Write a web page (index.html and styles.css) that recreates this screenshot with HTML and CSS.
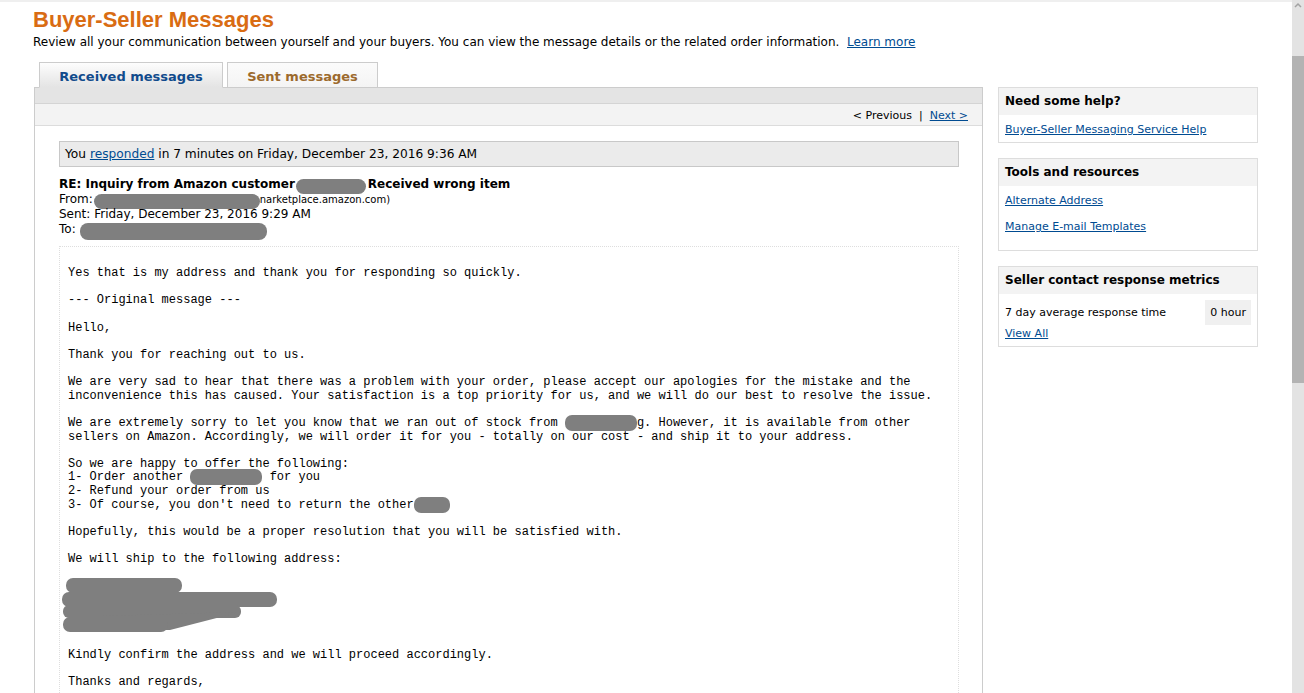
FILE: index.html
```html
<!DOCTYPE html>
<html lang="en">
<head>
  <meta charset="UTF-8">
  <title>Buyer-Seller Messages</title>
  <link rel="stylesheet" href="styles.css">
</head>
<body>
  <div class="window">
    <div class="page">
      <h1 class="title">Buyer-Seller Messages</h1>
      <p class="intro">Review all your communication between yourself and your buyers. You can view the message details or the related order information. &nbsp;<a href="#">Learn more</a></p>

      <div class="layout">
        <div class="main">
          <div class="tabs">
            <a class="tab active" href="#">Received messages</a>
            <a class="tab" href="#">Sent messages</a>
          </div>
          <div class="panel">
            <div class="panel-bar"></div>
            <div class="pager">&lt; Previous &nbsp;|&nbsp; <a href="#">Next &gt;</a></div>
            <div class="panel-body">
              <div class="responded">You <a href="#">responded</a> in 7 minutes on Friday, December 23, 2016 9:36 AM</div>
              <div class="msg-head">
                <div class="subject">RE: Inquiry from Amazon customer<span class="redact r-name"></span>Received wrong item</div>
                <div>From:<span class="redact r-from"></span><span class="addr">narketplace.amazon.com)</span></div>
                <div>Sent: Friday, December 23, 2016 9:29 AM</div>
                <div>To: <span class="redact r-to"></span></div>
              </div>
              <div class="msg-body">
<pre>Yes that is my address and thank you for responding so quickly.

--- Original message ---

Hello,

Thank you for reaching out to us.

We are very sad to hear that there was a problem with your order, please accept our apologies for the mistake and the
inconvenience this has caused. Your satisfaction is a top priority for us, and we will do our best to resolve the issue.

We are extremely sorry to let you know that we ran out of stock from <span class="hide">          </span>g. However, it is available from other
sellers on Amazon. Accordingly, we will order it for you - totally on our cost - and ship it to your address.

So we are happy to offer the following:
1- Order another <span class="hide">          </span> for you
2- Refund your order from us
3- Of course, you don't need to return the other<span class="hide">     </span>

Hopefully, this would be a proper resolution that you will be satisfied with.

We will ship to the following address:

</pre>
                <svg class="address" width="230" height="55" viewBox="0 0 230 55">
                  <g fill="#7f7f7f">
                    <rect x="4" y="0" width="116" height="15" rx="7"/>
                    <rect x="0" y="14" width="215" height="15" rx="7"/>
                    <rect x="1" y="27" width="178" height="13" rx="6"/>
                    <polygon points="40,38 178,34 108,52 40,52"/>
                    <rect x="1" y="39" width="105" height="15" rx="7"/>
                  </g>
                </svg>
<pre>

Kindly confirm the address and we will proceed accordingly.

Thanks and regards,

</pre>
              </div>
            </div>
          </div>
        </div>

        <div class="sidebar">
          <div class="box">
            <div class="box-head">Need some help?</div>
            <div class="box-body">
              <a href="#">Buyer-Seller Messaging Service Help</a>
            </div>
          </div>
          <div class="box">
            <div class="box-head">Tools and resources</div>
            <div class="box-body links">
              <a href="#">Alternate Address</a>
              <a href="#">Manage E-mail Templates</a>
            </div>
          </div>
          <div class="box">
            <div class="box-head">Seller contact response metrics</div>
            <div class="box-body">
              <div class="metric">
                <span>7 day average response time</span>
                <span class="metric-value">0 hour</span>
              </div>
              <a href="#">View All</a>
            </div>
          </div>
        </div>
      </div>
    </div>

    <div class="scrollbar">
      <svg class="scroll-up" width="12" height="10" viewBox="0 0 12 10">
        <path d="M3 7 L6 4 L9 7" fill="none" stroke="#a3a3a3" stroke-width="1.5"/>
      </svg>
      <div class="thumb"></div>
    </div>
  </div>
</body>
</html>
```

FILE: styles.css
```css
html, body {
  margin: 0;
  height: 100%;
  overflow: hidden;
}
body {
  font-family: "DejaVu Sans", Verdana, sans-serif;
  color: #000;
  background: #fff;
}
a {
  color: #004b91;
}
.window {
  display: flex;
  height: 693px;
}
.page {
  flex: 1;
  border-top: 2px solid #efefef;
  padding: 0 34px 0 33px;
  overflow: hidden;
}
.title {
  margin: 0;
  padding-top: 5px;
  font-family: "Liberation Sans", Arial, sans-serif;
  font-size: 22px;
  line-height: 25px;
  font-weight: bold;
  color: #d96c13;
}
.intro {
  margin: 2px 0 0;
  font-size: 12px;
  line-height: 16px;
}
.layout {
  display: flex;
  gap: 15px;
  padding-left: 1px;
  margin-top: 12px;
}
.main {
  flex: 1;
}
.tabs {
  display: flex;
  align-items: flex-start;
  gap: 4px;
  margin-left: 5px;
  margin-bottom: -1px;
}
.tab {
  position: relative;
  box-sizing: border-box;
  width: 151px;
  border: 1px solid #ccc;
  padding-top: 3px;
  line-height: 21px;
  text-align: center;
  font-size: 13px;
  font-weight: bold;
  text-decoration: none;
  color: #9c6a2d;
  background: linear-gradient(#fbfbfb, #f4f4f4);
}
.tab.active {
  width: 184px;
  color: #114b8c;
  border-bottom-color: #e4e4e4;
  background: linear-gradient(#fdfdfd, #e4e4e4);
}
.panel {
  border: 1px solid #ccc;
  border-bottom: none;
  height: 700px;
}
.panel-bar {
  height: 15px;
  background: #e4e4e4;
  border-bottom: 1px solid #d4d4d4;
}
.pager {
  background: #f3f3f3;
  border-bottom: 1px solid #dcdcdc;
  font-size: 11px;
  padding-top: 2px;
  line-height: 19px;
  text-align: right;
  padding-right: 14px;
}
.panel-body {
  padding: 15px 23px 0 24px;
}
.responded {
  background: #ebebeb;
  border: 1px solid #c8c8c8;
  padding: 0 5px;
  font-size: 12.2px;
  line-height: 24px;
}
.msg-head {
  margin-top: 10px;
  font-size: 12px;
  line-height: 15px;
}
.subject {
  font-weight: bold;
}
.redact {
  display: inline-block;
  height: 15px;
  margin: -3px 0;
  border-radius: 8px;
  background: #7f7f7f;
  vertical-align: -3px;
}
.r-name {
  width: 70px;
  margin-left: 1px;
  margin-right: 2px;
}
.r-from {
  width: 166px;
  margin-left: 1px;
}
.r-to {
  width: 187px;
  height: 17px;
  vertical-align: -4px;
}
.addr {
  font-size: 10px;
}
.msg-body {
  margin-top: 9px;
  border: 1px dotted #dedede;
  border-bottom: none;
  padding: 20px 8px 0;
}
.msg-body pre {
  margin: 0;
  font-family: "Liberation Mono", "Courier New", monospace;
  font-size: 12px;
  line-height: 13.63px;
}
.hide {
  background: #7f7f7f;
  border-radius: 7px;
  padding: 1px 0;
}
.address {
  display: block;
  margin: -2px 0 1.5px -6px;
}
.sidebar {
  width: 260px;
  margin-top: 25px;
}
.box {
  border: 1px solid #ddd;
  margin-bottom: 15px;
  font-size: 11px;
}
.box-head {
  background: #f3f3f3;
  font-size: 12px;
  font-weight: bold;
  line-height: 16px;
  padding: 5px 6px 6px;
}
.box-body {
  padding: 7px 6px 5px;
  line-height: 15px;
}
.links a {
  display: block;
  margin-bottom: 11px;
}
.metric {
  display: flex;
  justify-content: space-between;
  align-items: center;
  margin: -1px 0 1px;
}
.metric-value {
  background: #f0f0f0;
  line-height: 25px;
  padding: 0 5px;
}
.scrollbar {
  width: 12px;
  background: #e3e3e3;
}
.scroll-up {
  display: block;
}
.thumb {
  margin-top: 46px;
  height: 327px;
  background: #b3b3b3;
}
```
